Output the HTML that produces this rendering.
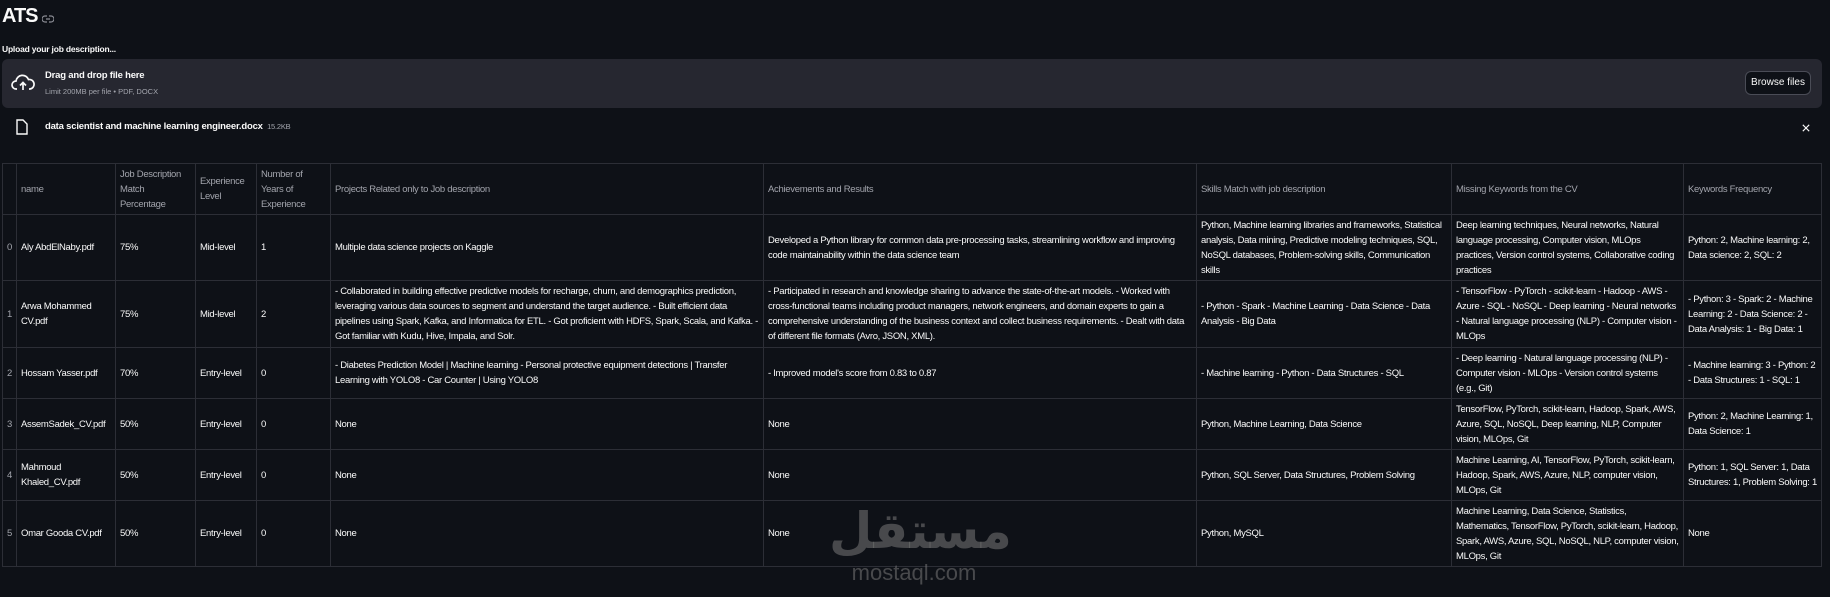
<!DOCTYPE html>
<html><head><meta charset="utf-8"><style>
*{box-sizing:border-box;margin:0;padding:0}
body{width:1830px;height:597px;background:#0e1117;color:#fafafa;font-family:"Liberation Sans",sans-serif;position:relative;overflow:hidden}
.abs{position:absolute}
h1{position:absolute;left:2px;top:5px;font-size:20px;font-weight:700;letter-spacing:-1px}
.drop{left:2px;top:59px;width:1820px;height:49px;background:#262730;border-radius:6px}
.btn{left:1745px;top:71px;width:66px;height:24px;border:1px solid #4a4c56;border-radius:6px;background:#0e1117;font-size:10px;text-align:center;line-height:22px}
table{position:absolute;left:2px;top:163px;width:1819px;border-collapse:collapse;table-layout:fixed;font-size:9.5px;letter-spacing:-0.3px;line-height:15px}
td,th{border:1px solid #2c2e36;padding:0 4px;vertical-align:middle;text-align:left;font-weight:400;overflow:hidden}
th{color:#a3a5ad}
td.i{color:#a3a5ad;padding:0 2px;text-align:center}
</style></head><body>
<h1>ATS</h1>
<svg class="abs" style="left:42px;top:15px" width="12" height="8" viewBox="0 0 12 8"><path d="M5 1H3a3 3 0 0 0 0 6h2M7 1h2a3 3 0 0 1 0 6H7M4 4h4" fill="none" stroke="#8a8c94" stroke-width="1.2"/></svg>
<div class="abs" style="left:2px;top:44px;font-size:8.5px;font-weight:700;letter-spacing:-0.2px">Upload your job description...</div>
<div class="abs drop"></div>
<svg class="abs" style="left:11px;top:74px" width="24" height="18" viewBox="0 0 24 18"><path d="M6 15H5a4 4 0 0 1 0-8 6.5 6.5 0 0 1 12.5-1.5A4.5 4.5 0 0 1 19 15h-1" fill="none" stroke="#fafafa" stroke-width="1.7"/><path d="M12 16V9M9 11.5l3-3 3 3" fill="none" stroke="#fafafa" stroke-width="1.7"/></svg>
<div class="abs" style="left:45px;top:70px;font-size:9.5px;font-weight:700;letter-spacing:-0.2px">Drag and drop file here</div>
<div class="abs" style="left:45px;top:87px;font-size:7.5px;color:#a3a5ad">Limit 200MB per file • PDF, DOCX</div>
<div class="abs btn">Browse files</div>
<svg class="abs" style="left:16px;top:119px" width="12" height="16" viewBox="0 0 12 16"><path d="M1 1h6l4 4v10H1z" fill="none" stroke="#fafafa" stroke-width="1.4"/></svg>
<div class="abs" style="left:45px;top:121px;font-size:9.5px;font-weight:700;letter-spacing:-0.2px">data scientist and machine learning engineer.docx <span style="font-size:7.5px;color:#a3a5ad;font-weight:400">&nbsp;15.2KB</span></div>
<svg class="abs" style="left:1802px;top:124px" width="8" height="8" viewBox="0 0 10 10"><path d="M1 1l8 8M9 1l-8 8" stroke="#fafafa" stroke-width="1.4"/></svg>
<table>
<colgroup><col style="width:14px"><col style="width:99px"><col style="width:80px"><col style="width:61px"><col style="width:74px"><col style="width:433px"><col style="width:433px"><col style="width:255px"><col style="width:232px"><col style="width:138px"></colgroup>
<tr style="height:51px"><th></th><th>name</th><th>Job Description Match Percentage</th><th>Experience Level</th><th>Number of Years of Experience</th><th>Projects Related only to Job description</th><th>Achievements and Results</th><th>Skills Match with job description</th><th>Missing Keywords from the CV</th><th>Keywords Frequency</th></tr>
<tr style="height:66px"><td class="i">0</td><td>Aly AbdElNaby.pdf</td><td>75%</td><td>Mid-level</td><td>1</td><td>Multiple data science projects on Kaggle</td><td>Developed a Python library for common data pre-processing tasks, streamlining workflow and improving code maintainability within the data science team</td><td>Python, Machine learning libraries and frameworks, Statistical analysis, Data mining, Predictive modeling techniques, SQL, NoSQL databases, Problem-solving skills, Communication skills</td><td>Deep learning techniques, Neural networks, Natural language processing, Computer vision, MLOps practices, Version control systems, Collaborative coding practices</td><td>Python: 2, Machine learning: 2, Data science: 2, SQL: 2</td></tr>
<tr style="height:67px"><td class="i">1</td><td>Arwa Mohammed CV.pdf</td><td>75%</td><td>Mid-level</td><td>2</td><td>- Collaborated in building effective predictive models for recharge, churn, and demographics prediction, leveraging various data sources to segment and understand the target audience. - Built efficient data pipelines using Spark, Kafka, and Informatica for ETL. - Got proficient with HDFS, Spark, Scala, and Kafka. - Got familiar with Kudu, Hive, Impala, and Solr.</td><td>- Participated in research and knowledge sharing to advance the state-of-the-art models. - Worked with cross-functional teams including product managers, network engineers, and domain experts to gain a comprehensive understanding of the business context and collect business requirements. - Dealt with data of different file formats (Avro, JSON, XML).</td><td>- Python - Spark - Machine Learning - Data Science - Data Analysis - Big Data</td><td>- TensorFlow - PyTorch - scikit-learn - Hadoop - AWS - Azure - SQL - NoSQL - Deep learning - Neural networks - Natural language processing (NLP) - Computer vision - MLOps</td><td>- Python: 3 - Spark: 2 - Machine Learning: 2 - Data Science: 2 - Data Analysis: 1 - Big Data: 1</td></tr>
<tr style="height:51px"><td class="i">2</td><td>Hossam Yasser.pdf</td><td>70%</td><td>Entry-level</td><td>0</td><td>- Diabetes Prediction Model | Machine learning - Personal protective equipment detections | Transfer Learning with YOLO8 - Car Counter | Using YOLO8</td><td>- Improved model's score from 0.83 to 0.87</td><td>- Machine learning - Python - Data Structures - SQL</td><td>- Deep learning - Natural language processing (NLP) - Computer vision - MLOps - Version control systems (e.g., Git)</td><td>- Machine learning: 3 - Python: 2 - Data Structures: 1 - SQL: 1</td></tr>
<tr style="height:51px"><td class="i">3</td><td>AssemSadek_CV.pdf</td><td>50%</td><td>Entry-level</td><td>0</td><td>None</td><td>None</td><td>Python, Machine Learning, Data Science</td><td>TensorFlow, PyTorch, scikit-learn, Hadoop, Spark, AWS, Azure, SQL, NoSQL, Deep learning, NLP, Computer vision, MLOps, Git</td><td>Python: 2, Machine Learning: 1, Data Science: 1</td></tr>
<tr style="height:51px"><td class="i">4</td><td>Mahmoud Khaled_CV.pdf</td><td>50%</td><td>Entry-level</td><td>0</td><td>None</td><td>None</td><td>Python, SQL Server, Data Structures, Problem Solving</td><td>Machine Learning, AI, TensorFlow, PyTorch, scikit-learn, Hadoop, Spark, AWS, Azure, NLP, computer vision, MLOps, Git</td><td>Python: 1, SQL Server: 1, Data Structures: 1, Problem Solving: 1</td></tr>
<tr style="height:66px"><td class="i">5</td><td>Omar Gooda CV.pdf</td><td>50%</td><td>Entry-level</td><td>0</td><td>None</td><td>None</td><td>Python, MySQL</td><td>Machine Learning, Data Science, Statistics, Mathematics, TensorFlow, PyTorch, scikit-learn, Hadoop, Spark, AWS, Azure, SQL, NoSQL, NLP, computer vision, MLOps, Git</td><td>None</td></tr>
</table>
<div class="abs" style="left:829px;top:494px;width:170px;text-align:center;font-family:'Noto Sans CJK SC','DejaVu Sans',sans-serif;font-size:50px;font-weight:700;color:rgba(120,120,120,0.55);line-height:66px">مستقل</div>
<div class="abs" style="left:834px;top:560px;width:160px;text-align:center;font-family:'Liberation Sans',sans-serif;font-size:22px;color:rgba(120,120,120,0.55)">mostaql.com</div>
</body></html>
